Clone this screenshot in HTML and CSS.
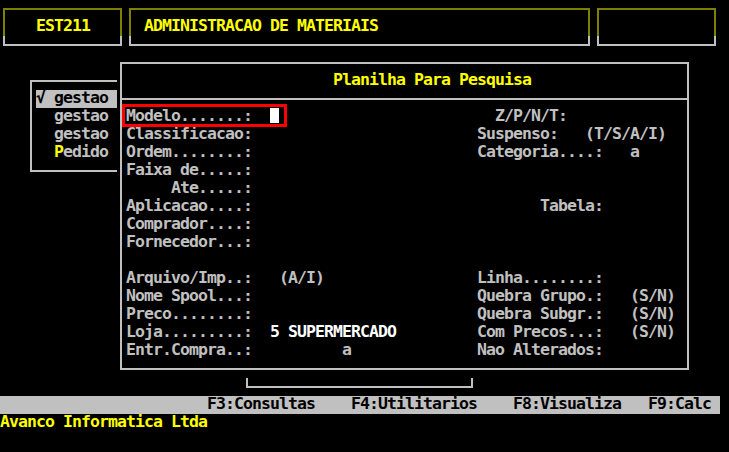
FILE: index.html
```html
<!DOCTYPE html>
<html lang="pt">
<head>
    <meta charset="UTF-8">
    <meta name="viewport" content="width=device-width, initial-scale=1.0">
    <title>EST211 - Administracao de Materiais</title>
    <link rel="stylesheet" href="styles.css">
</head>
<body>
    <div class="screen">
        <div class="frame top-box box-code"><span class="yellow">EST211</span></div>
        <div class="frame top-box box-title"><span class="yellow">ADMINISTRACAO DE MATERIAIS</span></div>
        <div class="frame top-box box-extra"></div>

        <div class="frame menu">
            <div class="menu-item selected">√ gestao </div>
            <div class="menu-item">  gestao </div>
            <div class="menu-item">  gestao </div>
            <div class="menu-item">  <span class="yellow">P</span>edido </div>
        </div>

        <div class="frame dialog">
            <div class="line"><span class="yellow">                       Planilha Para Pesquisa</span></div>
            <div class="line"></div>
            <div class="line">Modelo.......:  <span class="cursor"></span>                        Z/P/N/T:</div>
            <div class="line">Classificacao:                         Suspenso:   (T/S/A/I)</div>
            <div class="line">Ordem........:                         Categoria....:   a</div>
            <div class="line">Faixa de.....:</div>
            <div class="line">     Ate.....:</div>
            <div class="line">Aplicacao....:                                Tabela:</div>
            <div class="line">Comprador....:</div>
            <div class="line">Fornecedor...:</div>
            <div class="line"></div>
            <div class="line">Arquivo/Imp..:   (A/I)                 Linha........:</div>
            <div class="line">Nome Spool...:                         Quebra Grupo.:   (S/N)</div>
            <div class="line">Preco........:                         Quebra Subgr.:   (S/N)</div>
            <div class="line">Loja.........:  <span class="white">5 SUPERMERCADO</span>         Com Precos...:   (S/N)</div>
            <div class="line">Entr.Compra..:          a              Nao Alterados:</div>
        </div>

        <div class="frame bracket"></div>

        <div class="status-bar">                       F3:Consultas    F4:Utilitarios    F8:Visualiza   F9:Calc</div>
        <div class="footer">Avanco Informatica Ltda</div>

        <div class="focus-mark"></div>
    </div>
</body>
</html>
```

FILE: styles.css
```css
body {
    margin: 0;
    background: #000;
    width: 729px;
    height: 452px;
    overflow: hidden;
}
.screen {
    position: relative;
    display: grid;
    grid-template-columns: repeat(80, 9px);
    grid-template-rows: repeat(25, 18px);
    width: 720px;
    height: 450px;
    font-family: "DejaVu Sans Mono", "Liberation Mono", monospace;
    font-size: 16.5px;
    letter-spacing: -0.933px;
    font-weight: bold;
    line-height: 15px;
    color: #c0c0c0;
}
.yellow {
    color: #ffff00;
}
.white {
    color: #fff;
}

/* single line box, drawn through the middle of the border cells */
.frame {
    position: relative;
}
.frame::before {
    content: "";
    position: absolute;
    top: 8px;
    left: 3px;
    right: 4px;
    bottom: 8px;
    border: 2px solid #c0c0c0;
}

.top-box {
    grid-row: 1 / span 3;
    padding-top: 18px;
}
.top-box::before {
    border-image: linear-gradient(#808000 28px, #c0c0c0 28px) 2;
}
.box-code {
    grid-column: 1 / span 14;
    padding-left: 36px;
}
.box-title {
    grid-column: 15 / span 52;
    padding-left: 18px;
}
.box-extra {
    grid-column: 67 / span 14;
}

.menu {
    grid-column: 4 / span 11;
    grid-row: 5 / span 6;
    padding: 18px 0 0 9px;
}
.menu-item {
    width: 81px;
    height: 18px;
    white-space: pre;
}
.menu-item.selected {
    background: #c0c0c0;
    color: #000;
}

.dialog {
    grid-column: 14 / span 64;
    grid-row: 4 / span 18;
    padding: 18px 0 0 9px;
    background: #000;
}
.dialog::after {
    content: "";
    position: absolute;
    top: 44px;
    left: 3px;
    right: 4px;
    height: 2px;
    background: #c0c0c0;
}
.line {
    height: 18px;
    white-space: pre;
}
.cursor {
    display: inline-block;
    width: 9px;
    height: 15px;
    vertical-align: top;
    background: #fff;
}

.bracket {
    grid-column: 28 / span 26;
    grid-row: 22;
}
.bracket::before {
    top: 0;
    border-top: none;
}

.status-bar {
    grid-column: 1 / -1;
    grid-row: 23;
    background: #c0c0c0;
    color: #000;
    white-space: pre;
}
.footer {
    grid-column: 1 / -1;
    grid-row: 24;
    color: #ffff00;
    white-space: pre;
}

/* red highlight drawn over the first field */
.focus-mark {
    position: absolute;
    left: 122px;
    top: 104px;
    width: 165px;
    height: 23px;
    box-sizing: border-box;
    border: 3px solid #ff0000;
}
```
